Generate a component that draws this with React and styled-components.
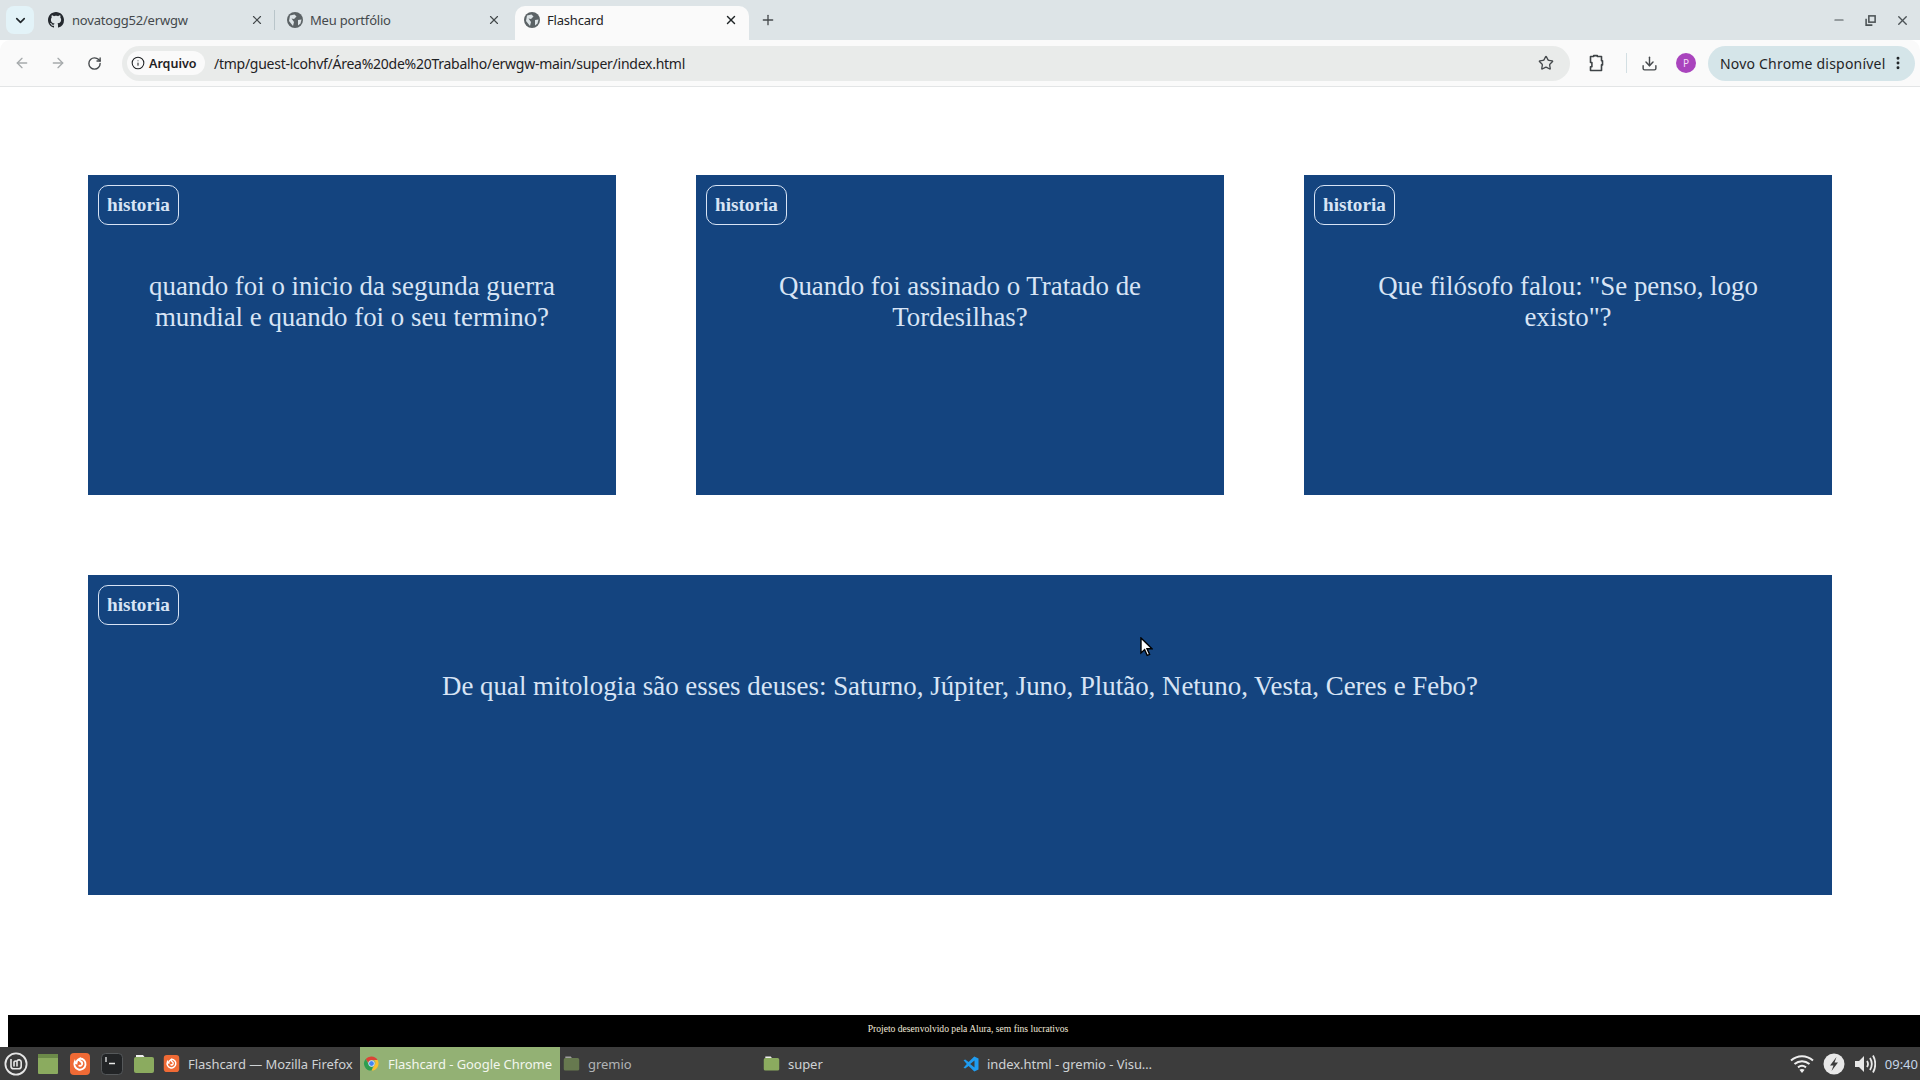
import React from 'react'
import styled, { createGlobalStyle } from 'styled-components'
import { ArrowLeft, ArrowRight, RotateCw, Info, Star, Download, EllipsisVertical, X, Plus, ChevronDown, Minus } from 'lucide-react'

const Global = createGlobalStyle`
  html, body { margin: 0; padding: 0; height: 100%; overflow: hidden; background: #fff; }
  #root { height: 100%; }
`

const uiFont = `"Noto Sans", "Open Sans", sans-serif`

const Screen = styled.div`
  position: relative;
  display: flex;
  flex-direction: column;
  width: 1920px;
  height: 1080px;
  overflow: hidden;
`

const TabStrip = styled.div`
  display: flex;
  align-items: flex-end;
  height: 40px;
  flex: none;
  padding-left: 6px;
  background: #dde4e7;
  font: 13px ${uiFont};
`

const TabMenu = styled.div`
  display: flex;
  align-items: center;
  justify-content: center;
  width: 28px;
  height: 28px;
  margin: 0 2px 6px 0;
  border-radius: 8px;
  background: #e3f3f8;
  color: #22282c;
`

const Tab = styled.div`
  display: flex;
  align-items: center;
  width: ${p => p.$w}px;
  height: 34px;
  padding: 0 ${p => p.$right || 10}px 6px ${p => p.$pad}px;
  box-sizing: border-box;
  border-radius: 10px 10px 0 0;
  background: ${p => (p.$active ? '#fafafa' : 'transparent')};
  color: ${p => (p.$active ? '#1f2426' : '#44494c')};
`

const TabDivider = styled.div`
  width: 1px;
  height: 20px;
  margin-bottom: 10px;
  background: #b9c5ca;
`

const TabTitle = styled.span`
  flex: 1;
  margin-left: ${p => p.$gap}px;
  letter-spacing: -0.2px;
  white-space: nowrap;
`

const NewTab = styled.div`
  display: flex;
  justify-content: center;
  width: 38px;
  margin-bottom: 12px;
  color: #464a4d;
`

const WindowButtons = styled.div`
  display: flex;
  align-items: center;
  gap: 19px;
  margin-left: auto;
  height: 40px;
  padding-right: 10px;
  color: #4c5356;
`

const Toolbar = styled.div`
  display: flex;
  align-items: center;
  height: 46px;
  flex: none;
  background: #fafafa;
  border-bottom: 1px solid #e3e5e6;
  border-radius: 10px 10px 0 0;
  font: 14px ${uiFont};
`

const NavIcon = styled.div`
  display: flex;
  justify-content: center;
  flex: none;
  width: ${p => p.$w || 36}px;
  margin-left: ${p => p.$ml || 0}px;
  color: ${p => (p.$off ? '#a6aaac' : '#464a4d')};
`

const Omnibox = styled.div`
  display: flex;
  align-items: center;
  width: 1448px;
  height: 35px;
  margin-left: 10px;
  padding: 0 5px;
  box-sizing: border-box;
  border-radius: 18px;
  background: #e9ebea;
`

const Chip = styled.div`
  display: flex;
  align-items: center;
  gap: 4px;
  width: 78px;
  height: 24px;
  padding-left: 4px;
  box-sizing: border-box;
  border-radius: 12px;
  background: #fafafa;
  color: #1f2224;
  font-weight: 600;
  font-size: 12.5px;
`

const Url = styled.span`
  flex: 1;
  margin-left: 9px;
  color: #1f2224;
  letter-spacing: -0.26px;
  white-space: nowrap;
`

const Separator = styled.div`
  width: 1px;
  height: 20px;
  margin: 0 12px 0 13px;
  background: #d3dfe3;
`

const Avatar = styled.div`
  display: flex;
  align-items: center;
  justify-content: center;
  width: 20px;
  height: 20px;
  margin: 0 12px 0 17px;
  border-radius: 50%;
  background: #a944bd;
  color: #f3def7;
  font-size: 10px;
`

const UpdatePill = styled.div`
  display: flex;
  align-items: center;
  justify-content: space-between;
  width: 207px;
  height: 35px;
  padding: 0 9px 0 12px;
  box-sizing: border-box;
  border-radius: 18px;
  background: #d5e5e9;
  color: #1f2426;
  letter-spacing: 0.2px;
  white-space: nowrap;
`

const Page = styled.main`
  flex: 1;
  padding: 88px;
  font-family: "Liberation Serif", "Times New Roman", serif;
`

const CardGrid = styled.section`
  display: grid;
  grid-template-columns: repeat(3, 528px);
  gap: 80px;
`

const Card = styled.article`
  grid-column: ${p => (p.$wide ? '1 / -1' : 'auto')};
  height: 320px;
  padding: 10px;
  box-sizing: border-box;
  background: #14447f;
  color: #d8e4f5;
`

const Badge = styled.span`
  display: inline-block;
  height: 40px;
  padding: 0 8px;
  box-sizing: border-box;
  border: 1px solid #d8e4f5;
  border-radius: 10px;
  font-size: 19.2px;
  font-weight: 700;
  line-height: 37px;
`

const Question = styled.p`
  margin: 46px 20px 0;
  font-size: 26.88px;
  line-height: 31px;
  text-align: center;
`

const Footer = styled.footer`
  flex: none;
  width: 1920px;
  height: 32px;
  margin-left: 8px;
  background: #000;
  color: #f0e8da;
  font: 9.6px/28px "Liberation Serif", serif;
  text-align: center;
`

const Taskbar = styled.div`
  display: flex;
  align-items: center;
  flex: none;
  height: 33px;
  background: #3c3c3c;
  color: #cfd2d4;
  font: 13px ${uiFont};
`

const Launcher = styled.div`
  display: flex;
  justify-content: center;
  flex: none;
  width: 32px;
`

const WindowButton = styled.div`
  display: flex;
  align-items: center;
  width: 200px;
  height: 33px;
  padding-left: 3px;
  box-sizing: border-box;
  background: ${p => (p.$active ? '#93b174' : 'transparent')};
  color: ${p => (p.$active ? '#f2f6ee' : p.$dim ? '#b0b3b5' : '#cfd2d4')};
  white-space: nowrap;
`

const WindowLabel = styled.span`
  margin-left: 8px;
  letter-spacing: -0.05px;
`

const Tray = styled.div`
  display: flex;
  align-items: center;
  gap: 9px;
  margin-left: auto;
  padding-right: 2px;
  color: #e8e8e8;
`

const Clock = styled.span`
  color: #c5d6e8;
`

const Pointer = styled.svg`
  position: absolute;
  left: 1140px;
  top: 637px;
`

const Globe = ({ color = '#5c6366' }) => (
  <svg width="16" height="16" viewBox="0 0 16 16">
    <circle cx="8" cy="8" r="8" fill={color} />
    <path d="M3 3.5 L7.5 2.5 L9.5 4.5 L7 7 L4.5 6.5 L7 10 L6 14 L2 9 Z M11 8 L14.5 7.5 L13.5 11.5 L11 13.5 Z" fill="#dde4e7" />
  </svg>
)

const GithubMark = () => (
  <svg width="16" height="16" viewBox="0 0 16 16" fill="#24292f">
    <path d="M8 0C3.58 0 0 3.58 0 8c0 3.54 2.29 6.53 5.47 7.59.4.07.55-.17.55-.38 0-.19-.01-.82-.01-1.49-2.01.37-2.53-.49-2.69-.94-.09-.23-.48-.94-.82-1.13-.28-.15-.68-.52-.01-.53.63-.01 1.08.58 1.23.82.72 1.21 1.87.87 2.33.66.07-.52.28-.87.51-1.07-1.78-.2-3.64-.89-3.64-3.95 0-.87.31-1.59.82-2.15-.08-.2-.36-1.02.08-2.12 0 0 .67-.21 2.2.82.64-.18 1.32-.27 2-.27s1.36.09 2 .27c1.53-1.04 2.2-.82 2.2-.82.44 1.1.16 1.92.08 2.12.51.56.82 1.27.82 2.15 0 3.07-1.87 3.75-3.65 3.95.29.25.54.73.54 1.48 0 1.07-.01 1.93-.01 2.2 0 .21.15.46.55.38A8.01 8.01 0 0 0 16 8c0-4.42-3.58-8-8-8z" />
  </svg>
)

const PuzzleIcon = () => (
  <svg width="18" height="18" viewBox="0 0 18 18" fill="none" stroke="#3e4346" strokeWidth="1.6">
    <path d="M3.5 2.5h3.2V1.6h3.6v.9h4.2v4.2h1v4.2h-1v5.6H3.5v-3.7h1.4V8.5H3.5z" strokeLinejoin="round" />
  </svg>
)

const RestoreIcon = () => (
  <svg width="11" height="11" viewBox="0 0 10 10" fill="none" stroke="#4c5356" strokeWidth="1.4">
    <rect x="3.5" y="0.8" width="5.7" height="5.7" />
    <path d="M1 3.5v5.7h5.7" />
  </svg>
)

const MintLogo = () => (
  <svg width="24" height="24" viewBox="0 0 24 24" fill="none" stroke="#e6e6e6">
    <circle cx="12" cy="12" r="10.6" strokeWidth="1.8" />
    <path d="M7 7v7.2a2.6 2.6 0 0 0 2.6 2.6h5a2.6 2.6 0 0 0 2.6-2.6V10a2.2 2.2 0 0 0-4.3-.6A2.2 2.2 0 0 0 10 10v4.5M13 10v4.5" strokeWidth="1.6" />
  </svg>
)

const FilesIcon = () => (
  <svg width="22" height="22" viewBox="0 0 22 22">
    <rect x="1" y="1" width="20" height="20" rx="1" fill="#8bab5f" />
    <rect x="1" y="1" width="20" height="4" fill="#6c8a49" />
  </svg>
)

const FirefoxTile = ({ size = 22 }) => (
  <svg width={size} height={size} viewBox="0 0 22 22">
    <rect x="1" y="0" width="20" height="22" rx="4" fill="#ef6a35" />
    <path d="M11 5.5a5.6 5.6 0 1 1-5.2 3.4c.3 1 .9 1.4 1.6 1.5-.1-1.8 1-3.5 3-4.5-.3 1 0 1.8.9 2.3 1.5.8 2.2 1.8 1.8 3.1-.4 1.2-1.7 1.8-2.8 1.4" fill="none" stroke="#fff" strokeWidth="1.9" strokeLinecap="round" />
  </svg>
)

const TerminalIcon = () => (
  <svg width="22" height="22" viewBox="0 0 22 22">
    <rect x="0.5" y="0.5" width="21" height="21" rx="4" fill="#222426" stroke="#55585a" />
    <path d="M5 4v5M8 10.5h6" stroke="#e8e8e8" strokeWidth="1.3" />
  </svg>
)

const Folder = ({ size = 22, dim }) => (
  <svg width={size} height={size} viewBox="0 0 22 22" opacity={dim ? 0.55 : 1}>
    <path d="M3 2h7l1.5 2H3z" fill="#f0f0f0" />
    <rect x="1" y="4" width="20" height="16" rx="2" fill="#8bab5f" />
  </svg>
)

const ChromeLogo = () => (
  <svg width="17" height="17" viewBox="0 0 48 48">
    <path d="M24 4a20 20 0 0 1 17.3 10H24a10 10 0 0 0-9.6 7.2L7.5 11.3A20 20 0 0 1 24 4z" fill="#db4437" />
    <path d="M41.3 14A20 20 0 0 1 24 44l8.6-15a10 10 0 0 0-1-15z" fill="#fbc02d" />
    <path d="M24 44A20 20 0 0 1 7.5 11.3L16 26a10 10 0 0 0 12 7.5z" fill="#2e9e4f" />
    <circle cx="24" cy="24" r="8" fill="#4285f4" stroke="#fff" strokeWidth="2" />
  </svg>
)

const VscodeLogo = () => (
  <svg width="16" height="16" viewBox="0 0 16 16">
    <path d="M11.3 0.6 15.5 2.6v10.8l-4.2 2L5.6 10 2.2 12.6.5 11.7 3.8 8 .5 4.3l1.7-.9L5.6 6z" fill="#1f9cf0" />
    <path d="M11.5 4.6v6.8L7.2 8z" fill="#3c3c3c" />
  </svg>
)

const WifiIcon = () => (
  <svg width="24" height="20" viewBox="0 0 24 20" fill="none" stroke="#eeeeee" strokeWidth="2">
    <path d="M1 6.5C7.5.8 16.5.8 23 6.5M4.5 10c4.5-3.8 10.5-3.8 15 0M8 13.4c2.5-2 5.5-2 8 0" />
    <path d="M12 19l-2.6-3.2c1.6-1 3.6-1 5.2 0z" fill="#eeeeee" stroke="none" />
  </svg>
)

const BoltIcon = () => (
  <svg width="22" height="22" viewBox="0 0 22 22">
    <circle cx="11" cy="11" r="10.5" fill="#e8e8e8" />
    <path d="M13.5 4 7 12.5h3.5L8.5 18l6.5-8.5h-3.5z" fill="#3c3c3c" />
  </svg>
)

const VolumeIcon = () => (
  <svg width="22" height="22" viewBox="0 0 22 22" fill="none" stroke="#e8e8e8" strokeWidth="1.8">
    <path d="M1 8h4l5-5v16l-5-5H1z" fill="#e8e8e8" stroke="none" />
    <path d="M13 8c1.2 1.8 1.2 4.2 0 6M16 5c2.2 3.6 2.2 8.4 0 12M19 2.5c3 5 3 12 0 17" />
  </svg>
)

const cards = [
  'quando foi o inicio da segunda guerra mundial e quando foi o seu termino?',
  'Quando foi assinado o Tratado de Tordesilhas?',
  'Que filósofo falou: "Se penso, logo existo"?',
  'De qual mitologia são esses deuses: Saturno, Júpiter, Juno, Plutão, Netuno, Vesta, Ceres e Febo?'
]

function App() {
  return (
    <Screen>
      <Global />
      <TabStrip>
        <TabMenu><ChevronDown size={15} strokeWidth={2.6} /></TabMenu>
        <Tab $w={238} $pad={12}>
          <GithubMark />
          <TabTitle $gap={8}>novatogg52/erwgw</TabTitle>
          <X size={14} strokeWidth={2} />
        </Tab>
        <TabDivider />
        <Tab $w={240} $pad={12} $right={14}>
          <Globe />
          <TabTitle $gap={7}>Meu portfólio</TabTitle>
          <X size={14} strokeWidth={2} />
        </Tab>
        <Tab $w={234} $pad={9} $right={11} $active>
          <Globe />
          <TabTitle $gap={7}>Flashcard</TabTitle>
          <X size={14} strokeWidth={2.4} />
        </Tab>
        <NewTab><Plus size={16} strokeWidth={2} /></NewTab>
        <WindowButtons>
          <Minus size={14} strokeWidth={2} />
          <RestoreIcon />
          <X size={15} strokeWidth={2.2} />
        </WindowButtons>
      </TabStrip>
      <Toolbar>
        <NavIcon $ml={4} $off><ArrowLeft size={16} /></NavIcon>
        <NavIcon $off><ArrowRight size={16} /></NavIcon>
        <NavIcon><RotateCw size={15} strokeWidth={2.2} /></NavIcon>
        <Omnibox>
          <Chip><Info size={14} strokeWidth={1.8} />Arquivo</Chip>
          <Url>/tmp/guest-lcohvf/Área%20de%20Trabalho/erwgw-main/super/index.html</Url>
          <NavIcon $w={38}><Star size={16} strokeWidth={2} /></NavIcon>
        </Omnibox>
        <NavIcon $w={34} $ml={9}><PuzzleIcon /></NavIcon>
        <Separator />
        <NavIcon $w={20}><Download size={17} strokeWidth={2} /></NavIcon>
        <Avatar>P</Avatar>
        <UpdatePill>Novo Chrome disponível<EllipsisVertical size={16} strokeWidth={2.4} /></UpdatePill>
      </Toolbar>
      <Page>
        <CardGrid>
          {cards.map((text, i) => (
            <Card key={i} $wide={i === 3}>
              <Badge>historia</Badge>
              <Question>{text}</Question>
            </Card>
          ))}
        </CardGrid>
      </Page>
      <Footer>Projeto desenvolvido pela Alura, sem fins lucrativos</Footer>
      <Taskbar>
        <Launcher><MintLogo /></Launcher>
        <Launcher><FilesIcon /></Launcher>
        <Launcher><FirefoxTile /></Launcher>
        <Launcher><TerminalIcon /></Launcher>
        <Launcher><Folder /></Launcher>
        <WindowButton>
          <FirefoxTile size={17} />
          <WindowLabel>Flashcard — Mozilla Firefox</WindowLabel>
        </WindowButton>
        <WindowButton $active>
          <ChromeLogo />
          <WindowLabel>Flashcard - Google Chrome</WindowLabel>
        </WindowButton>
        <WindowButton $dim>
          <Folder size={17} dim />
          <WindowLabel>gremio</WindowLabel>
        </WindowButton>
        <WindowButton>
          <Folder size={17} />
          <WindowLabel>super</WindowLabel>
        </WindowButton>
        <WindowButton>
          <VscodeLogo />
          <WindowLabel>index.html - gremio - Visu…</WindowLabel>
        </WindowButton>
        <Tray>
          <WifiIcon />
          <BoltIcon />
          <VolumeIcon />
          <Clock>09:40</Clock>
        </Tray>
      </Taskbar>
      <Pointer width="13" height="20" viewBox="0 0 13 20">
        <path d="M1 1v15l3.6-3.4 2.6 5.8 2.4-1-2.6-5.6H12z" fill="#fff" stroke="#000" strokeWidth="1.4" />
      </Pointer>
    </Screen>
  )
}

export default App
